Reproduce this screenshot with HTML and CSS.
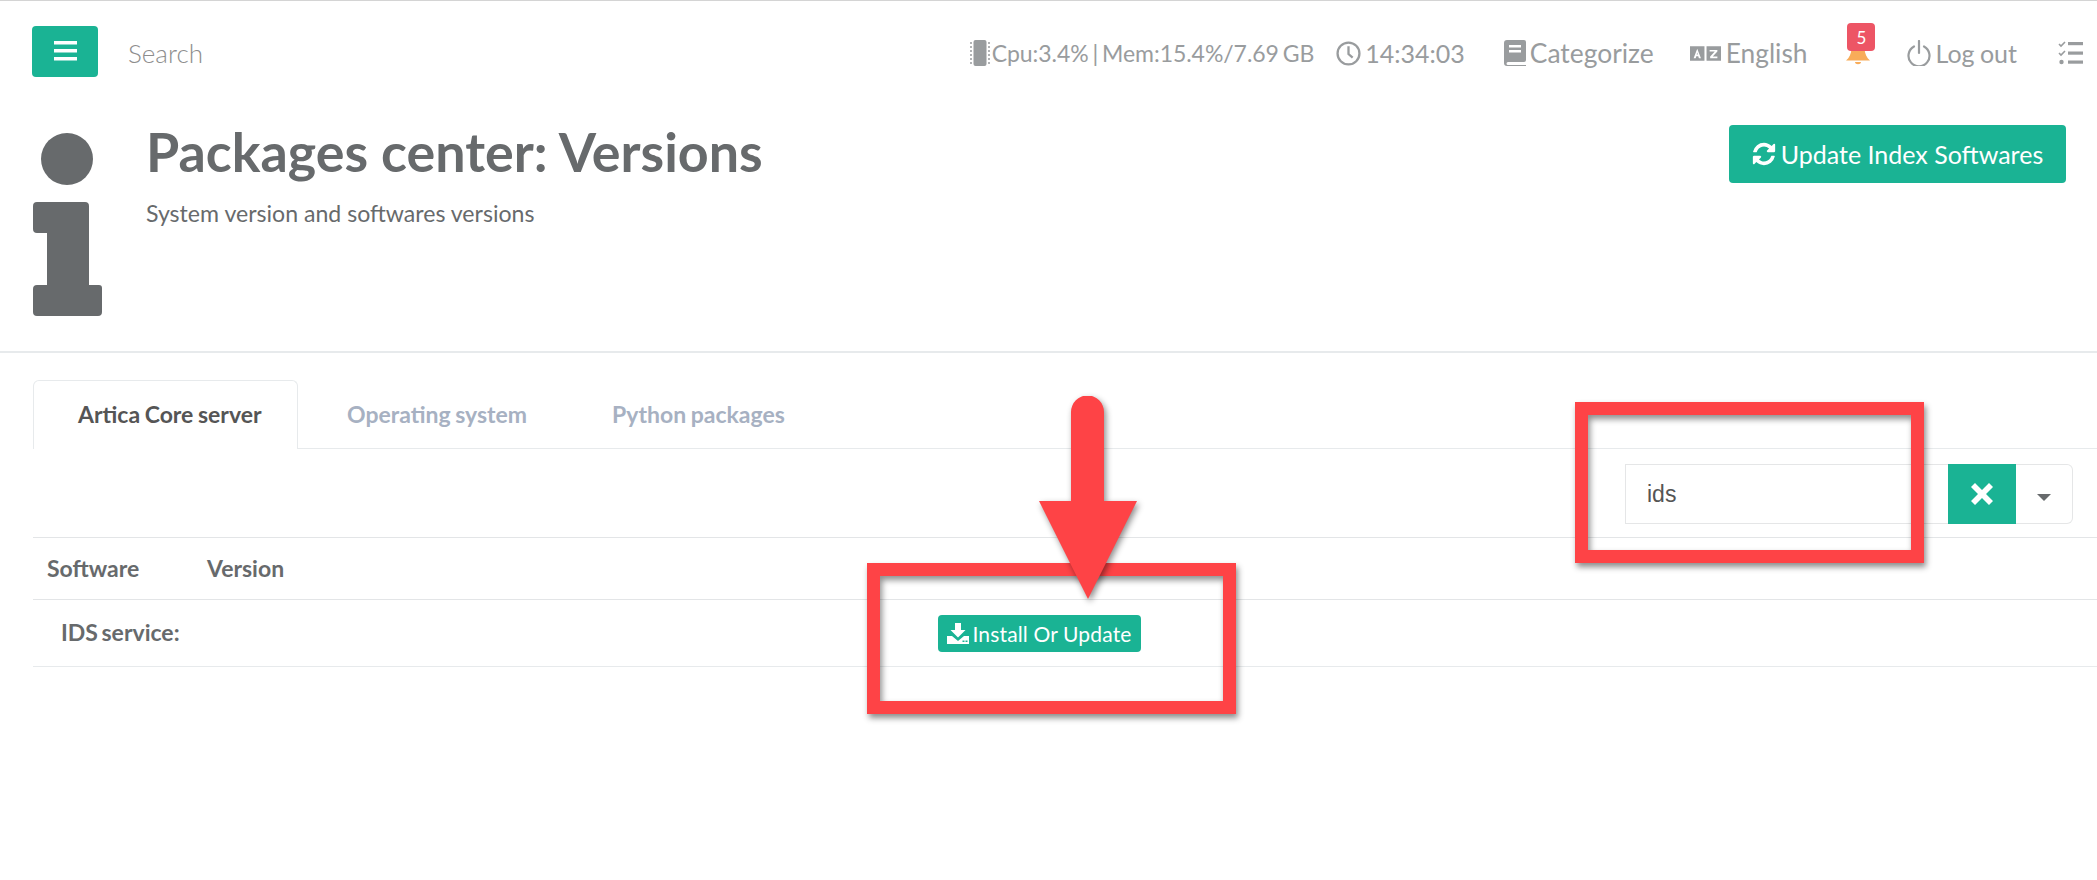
FILE: index.html
```html
<!DOCTYPE html>
<html lang="en">
<head>
<meta charset="utf-8">
<title>Packages center: Versions</title>
<link rel="stylesheet" href="styles.css">
</head>
<body>
<div class="page">
  <header class="topbar">
    <button class="menu-btn" type="button" aria-label="Menu">
      <svg class="ic-menu" viewBox="0 0 23 20"><rect y="0" width="23" height="3.500"/><rect y="8" width="23" height="3.500"/><rect y="16" width="23" height="3.500"/></svg>
    </button>
    <span class="search-label">Search</span>
    <nav class="nav">
      <span class="nav-item item-cpu">
        <svg class="ic ic-cpu" viewBox="0 0 20 26"><rect x="3.500" y="0" width="13" height="26" rx="2"/><path class="dots" d="M0 3h2M0 7h2M0 11h2M0 15h2M0 19h2M0 23h2M18 3h2M18 7h2M18 11h2M18 15h2M18 19h2M18 23h2"/></svg>
        <span>Cpu:3.4% | Mem:15.4%/7.69 GB</span>
      </span>
      <span class="nav-item item-clock">
        <svg class="ic ic-clock" viewBox="0 0 24 24"><circle cx="12" cy="12" r="10.500"/><path d="M12 5v7.500l4 3.500"/></svg>
        <span>14:34:03</span>
      </span>
      <span class="nav-item item-cat">
        <svg class="ic ic-book" viewBox="0 0 22 26"><path fill-rule="evenodd" d="M3 0h17a2 2 0 0 1 2 2v18a2 2 0 0 1-2 2H4a1.500 1.500 0 0 0 0 3h18v1H3a3 3 0 0 1-3-3V3a3 3 0 0 1 3-3zM5 5v2.500h12V5zm0 5v2.500h12V10z"/></svg>
        <span>Categorize</span>
      </span>
      <span class="nav-item item-lang">
        <svg class="ic ic-lang" viewBox="0 0 30 14"><path fill-rule="evenodd" d="M0 0h14v14H0zM7 2.500 3.500 11.500h2l.6-1.800h1.900l.6 1.800h2L7 2.500zM6.500 8 7 6l.6 2zM16 0h14v14H16zM19 3.500v1.500h5l-4.500 5v1.500h7V10h-4.500L26.500 5V3.500z"/></svg>
        <span>English</span>
      </span>
      <span class="nav-item item-bell">
        <svg class="ic ic-bell" viewBox="0 0 24 26"><path d="M12 0c5 0 6 4 6.500 9 .5 5 2 8.500 5.500 11.500H0C3.500 17.500 5 14 5.500 9 6 4 7 0 12 0z"/><path d="M9 22h6c0 3-6 3-6 0z"/></svg>
        <span class="badge">5</span>
      </span>
      <span class="nav-item item-logout">
        <svg class="ic ic-power" viewBox="0 0 24 26"><path d="M7 6.500a10.500 10.500 0 1 0 10 0"/><path d="M12 1v12"/></svg>
        <span>Log out</span>
      </span>
      <span class="nav-item item-tasks">
        <svg class="ic ic-tasks" viewBox="0 0 25 24"><path class="check" d="M1 3l2 2 4-4M1 12l2 2 4-4"/><circle cx="3.500" cy="21" r="2.200"/><rect x="10" y="1" width="15" height="3.200"/><rect x="10" y="10.500" width="15" height="3.200"/><rect x="10" y="19.500" width="15" height="3.200"/></svg>
      </span>
    </nav>
  </header>

  <section class="heading">
    <svg class="ic-info" viewBox="0 0 69 183"><ellipse cx="34" cy="26" rx="26" ry="26"/><path d="M4 69h48a4 4 0 0 1 4 4v79h10a3 3 0 0 1 3 3v24a4 4 0 0 1-4 4H4a4 4 0 0 1-4-4v-23a4 4 0 0 1 4-4h10v-52H4a4 4 0 0 1-4-4V73a4 4 0 0 1 4-4z"/></svg>
    <div class="heading-text">
      <h1>Packages center: Versions</h1>
      <p>System version and softwares versions</p>
    </div>
    <button class="btn-update" type="button">
      <svg class="ic-refresh" viewBox="0 0 1792 1792"><path d="M1639 1056q0 5-1 7-64 268-268 434.500t-478 166.500q-146 0-282.500-55t-243.500-157l-129 129q-19 19-45 19t-45-19-19-45v-448q0-26 19-45t45-19h448q26 0 45 19t19 45-19 45l-137 137q71 66 161 102t187 36q134 0 250-65t186-179q11-17 53-117 8-23 30-23h192q13 0 22.500 9.500t9.500 22.500zm25-800v448q0 26-19 45t-45 19h-448q-26 0-45-19t-19-45 19-45l138-138q-148-137-349-137-134 0-250 65t-186 179q-11 17-53 117-8 23-30 23h-199q-13 0-22.500-9.500t-9.500-22.500v-7q65-268 270-434.500t480-166.500q146 0 284 55.500t245 156.500l130-129q19-19 45-19t45 19 19 45z"/></svg>
      <span>Update Index Softwares</span>
    </button>
  </section>

  <section class="content">
    <ul class="tabs">
      <li class="tab tab-active">Artica Core server</li>
      <li class="tab">Operating system</li>
      <li class="tab">Python packages</li>
    </ul>
    <div class="toolbar">
      <div class="search-group">
        <div class="search-input">ids</div>
        <button class="search-clear" type="button" aria-label="Clear">
          <svg class="ic-x" viewBox="0 0 22 22"><path d="M4 0l7 7 7-7 4 4-7 7 7 7-4 4-7-7-7 7-4-4 7-7-7-7z"/></svg>
        </button>
        <button class="search-drop" type="button" aria-label="Options"><span class="caret"></span></button>
      </div>
    </div>
    <table class="versions">
      <colgroup><col class="col-a"><col class="col-b"><col></colgroup>
      <thead><tr><th>Software</th><th>Version</th><th></th></tr></thead>
      <tbody>
        <tr>
          <td class="name">IDS service:</td>
          <td></td>
          <td class="action">
            <button class="btn-install" type="button">
              <svg class="ic-dl" viewBox="0 0 22 21"><path d="M8 0h6v7h4.500L11 14.500 3.500 7H8z"/><path fill-rule="evenodd" d="M0 13h5l6 5 6-5h5v8H0zM15.500 17.500v1.500h2v-1.500zM18.500 17.500v1.500h2v-1.500z"/></svg>
              <span>Install Or Update</span>
            </button>
          </td>
        </tr>
      </tbody>
    </table>
  </section>

  <div class="mark mark-search"></div>
  <div class="mark mark-install"></div>
  <svg class="mark-arrow" viewBox="0 0 100 204"><path d="M33 16a16.500 16.500 0 0 1 33 0v89h33l-49 98-49-98h32z"/></svg>
</div>
</body>
</html>
```
FILE: styles.css
```css
* { box-sizing: border-box; }
html, body { margin: 0; padding: 0; background: #fff; }
body { font-family: Lato, "Open Sans", sans-serif; color: #676a6c; overflow: hidden; }
button { font-family: inherit; border: 0; margin: 0; cursor: pointer; }
.page { position: relative; width: 2097px; height: 880px; border-top: 1px solid #d4d4d4; overflow: hidden; }

.topbar { display: flex; align-items: center; height: 94px; padding: 10px 0 0 32px; }
.menu-btn { width: 66px; height: 51px; background: #1ab394; border-radius: 4px; display: flex; align-items: center; justify-content: center; padding: 0; margin-top: -4px; }
.ic-menu { width: 23px; height: 20px; fill: #fff; }
.search-label { margin-left: 30px; font-size: 26px; font-weight: 300; color: #8d8d8d; }
.nav { margin-left: auto; display: flex; align-items: center; font-size: 25px; color: #999c9e; padding-right: 14px; }
.nav-item { display: flex; align-items: center; position: relative; white-space: nowrap; }
.ic { display: block; flex: none; }
.ic-cpu { width: 20px; height: 26px; fill: #999c9e; margin-right: 2px; }
.ic-cpu .dots { stroke: #999c9e; stroke-width: 1.500; fill: none; }
.item-cpu { font-size: 23px; word-spacing: -2px; letter-spacing: -.05px; }
.item-clock { margin-left: 22px; }
.ic-clock { width: 25px; height: 25px; fill: none; stroke: #999c9e; stroke-width: 2.200; margin-right: 4px; }
.item-cat { margin-left: 39px; font-size: 26.400px; }
.ic-book { width: 22px; height: 26px; fill: #999c9e; margin-right: 4px; }
.item-lang { margin-left: 36px; font-size: 26.300px; }
.ic-lang { width: 31px; height: 15px; fill: #999c9e; margin-right: 5px; }
.item-bell { margin-left: 39px; width: 30px; height: 26px; }
.ic-bell { width: 24px; height: 26px; fill: #f8ac59; }
.badge { position: absolute; left: 1px; top: -17px; width: 28px; height: 28px; background: #ed5565; border-radius: 4px; color: #fff; font-size: 17px; display: flex; align-items: center; justify-content: center; }
.item-logout { margin-left: 31px; word-spacing: -1px; }
.ic-power { width: 24px; height: 26px; fill: none; stroke: #999c9e; stroke-width: 2.200; stroke-linecap: round; margin-right: 4px; }
.item-tasks { margin-left: 41px; }
.ic-tasks { width: 25px; height: 24px; fill: #999c9e; }
.ic-tasks .check { fill: none; stroke: #999c9e; stroke-width: 1.600; }

.heading { display: flex; align-items: flex-start; height: 258px; padding: 38px 31px 0 33px; border-bottom: 2px solid #e7eaec; }
.ic-info { width: 69px; height: 183px; fill: #676a6c; flex: none; }
.heading-text { margin-left: 44px; }
.heading h1 { margin: -18px 0 0; font-size: 53.800px; line-height: 72px; font-weight: 700; color: #676a6c; }
.heading p { margin: 10px 0 0; font-size: 23.100px; line-height: 32px; color: #676a6c; }
.btn-update { margin-left: auto; margin-top: -8px; width: 337px; height: 58px; background: #1ab394; color: #fff; border-radius: 4px; font-size: 25px; font-weight: 400; display: flex; align-items: center; justify-content: center; gap: 4px; padding: 0 1px 0 0; }
.ic-refresh { width: 26px; height: 26px; fill: #fff; }

.content { padding: 27px 0 0 33px; }
.tabs { display: flex; list-style: none; margin: 0; padding: 0; height: 69px; border-bottom: 1px solid #e7eaec; }
.tab { height: 69px; padding: 0 45px 2px 39px; font-size: 23px; font-weight: 700; color: #a7b1c2; display: flex; align-items: center; word-spacing: -1px; }
.tab-active { width: 265px; padding: 0 0 2px 44px; background: #fff; color: #555; border: 1px solid #e7eaec; border-bottom: 0; border-radius: 6px 6px 0 0; margin-right: 10px; }
.tab:last-child { margin-left: 1px; }
.toolbar { height: 88px; display: flex; justify-content: flex-end; align-items: flex-start; padding: 15px 24px 0 0; }
.search-group { display: flex; height: 60px; width: 448px; }
.search-input { flex: 1; border: 1px solid #e5e6e7; border-right: 0; font-family: "Liberation Sans", Arial, sans-serif; font-size: 23px; color: #555; padding-left: 21px; display: flex; align-items: center; }
.search-clear { width: 68px; background: #1ab394; display: flex; align-items: center; justify-content: center; padding: 0; }
.ic-x { width: 22px; height: 22px; fill: #fff; }
.search-drop { width: 57px; background: #fff; border: 1px solid #e5e6e7; border-left: 0; border-radius: 0 6px 6px 0; display: flex; align-items: center; justify-content: center; padding: 6px 0 0; }
.caret { width: 0; height: 0; border-left: 7px solid transparent; border-right: 7px solid transparent; border-top: 7px solid #676a6c; }

.versions { width: 100%; table-layout: fixed; border-collapse: collapse; }
.col-a { width: 160px; }
.col-b { width: 745px; }
.versions th { height: 62px; padding: 0 14px 2px; text-align: left; font-size: 23px; font-weight: 700; color: #676a6c; border-top: 1px solid #e3e5e7; border-bottom: 1px solid #e3e5e7; }
.versions td { height: 67px; padding: 0; border-bottom: 1px solid #e7eaec; font-size: 23px; }
.versions td.name { padding: 0 0 2px 28px; font-weight: 700; white-space: nowrap; word-spacing: -2px; }
.btn-install { width: 203px; height: 37px; background: #1ab394; color: #fff; border-radius: 4px; font-size: 21px; letter-spacing: .15px; display: flex; align-items: center; justify-content: center; gap: 3px; padding: 0; }
.ic-dl { width: 22px; height: 21px; fill: #fff; }

.mark { position: absolute; border: 13px solid #fe4346; box-shadow: 2px 4px 6px rgba(0,0,0,.45), inset 2px 4px 6px rgba(0,0,0,.45); }
.mark-search { left: 1575px; top: 401px; width: 349px; height: 161px; }
.mark-install { left: 867px; top: 562px; width: 369px; height: 151px; }
.mark-arrow { position: absolute; left: 1038px; top: 395px; width: 100px; height: 204px; fill: #fe4346; filter: drop-shadow(2px 3px 3px rgba(0,0,0,.45)); }
```
